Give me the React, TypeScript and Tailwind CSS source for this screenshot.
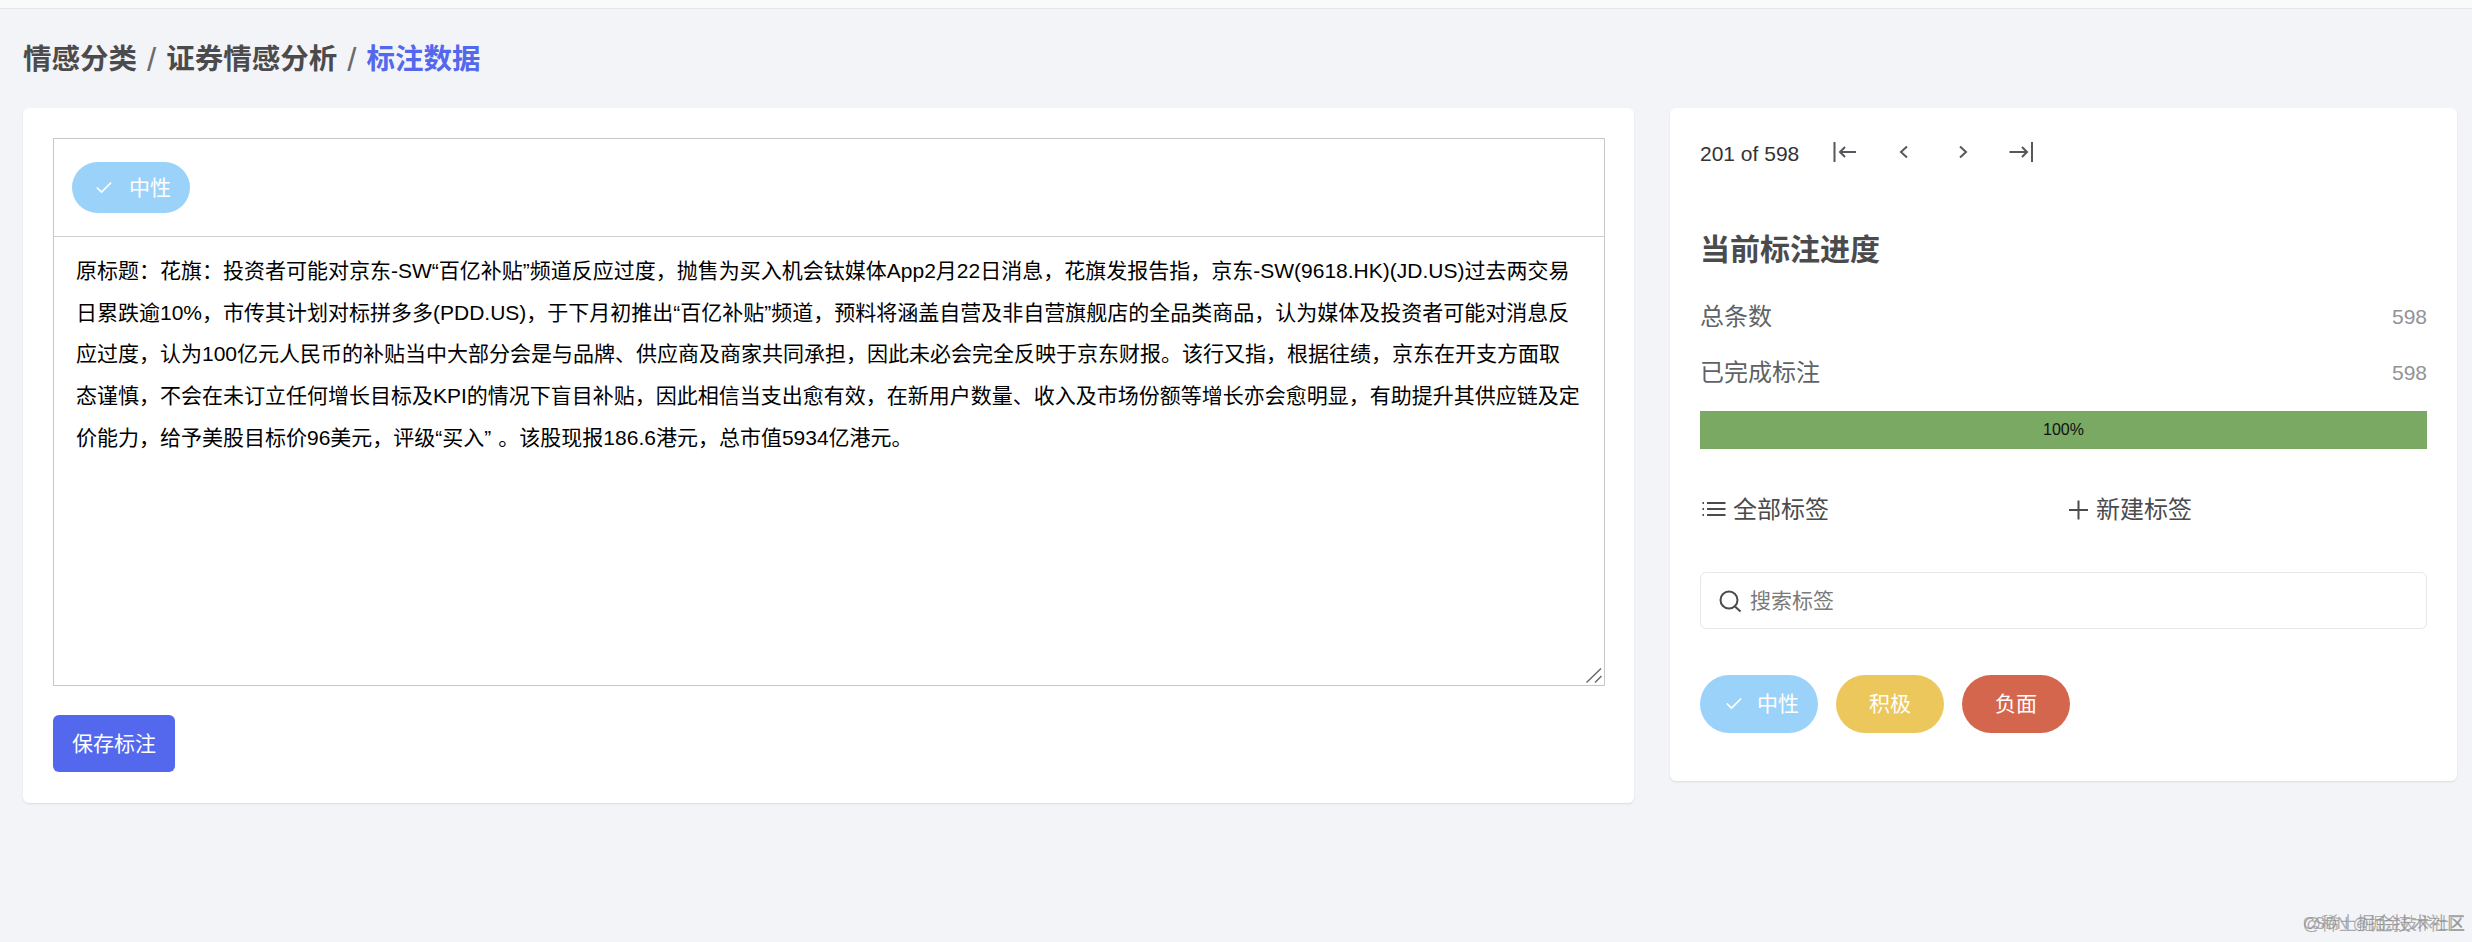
import { Check } from 'lucide-react'

const lines = [
  '原标题：花旗：投资者可能对京东-SW“百亿补贴”频道反应过度，抛售为买入机会钛媒体App2月22日消息，花旗发报告指，京东-SW(9618.HK)(JD.US)过去两交易',
  '日累跌逾10%，市传其计划对标拼多多(PDD.US)，于下月初推出“百亿补贴”频道，预料将涵盖自营及非自营旗舰店的全品类商品，认为媒体及投资者可能对消息反',
  '应过度，认为100亿元人民币的补贴当中大部分会是与品牌、供应商及商家共同承担，因此未必会完全反映于京东财报。该行又指，根据往绩，京东在开支方面取',
  '态谨慎，不会在未订立任何增长目标及KPI的情况下盲目补贴，因此相信当支出愈有效，在新用户数量、收入及市场份额等增长亦会愈明显，有助提升其供应链及定',
]

function NavIcon({ d, className }: { d: string; className?: string }) {
  return (
    <svg viewBox="0 0 26 26" fill="none" stroke="#57575c" strokeWidth={2} className={`h-[26px] w-[26px] ${className ?? ''}`}>
      <path d={d} />
    </svg>
  )
}

export default function App() {
  return (
    <div className="relative min-h-[942px] bg-[#f3f4f8] font-['Liberation_Sans','Noto_Sans_CJK_SC',sans-serif]">
      {/* Top bar */}
      <div className="h-[9px] border-b border-[#e6e7ea] bg-[#fafafb]" />

      <div className="flex h-[99px] items-center pt-[2px] pl-[23px] text-[28.5px] font-semibold text-[#4b4b4d]">
        <span>情感分类</span>
        <span className="mx-[10px] text-[33px] font-normal text-[#6b6b6e]">/</span>
        <span>证券情感分析</span>
        <span className="mx-[10px] text-[33px] font-normal text-[#6b6b6e]">/</span>
        <span className="text-[#5468ee]">标注数据</span>
      </div>

      <div className="flex items-start pl-[23px]">
        {/* Left card */}
        <div className="h-[695px] w-[1611px] rounded-md bg-white pl-[30px] pr-[29px] pt-[30px] shadow-[0_1px_2px_rgba(0,0,0,0.1)]">
          <div className="border border-[#c8c8c8]">
            <div className="flex h-[98px] items-center border-b border-[#cfcfcf] pl-[18px]">
              <div className="flex h-[51px] w-[118px] items-center rounded-[26px] bg-[#9bd2f9] pl-[22px] text-[21px] text-white">
                <Check className="h-[20px] w-[20px]" strokeWidth={2} />
                <span className="ml-[15px]">中性</span>
              </div>
            </div>
            <div className="relative h-[448px] px-[22px] pt-[13px] text-[21px] leading-[41.7px] text-black">
              {lines.map((line) => (
                <div key={line} className="whitespace-nowrap">
                  {line}
                </div>
              ))}
              <div className="whitespace-nowrap">
                价能力，给予美股目标价96美元，评级“买入”<span className="ml-[7px]">。该股现报186.6港元，总市值5934亿港元。</span>
              </div>
              {/* Resize handle */}
              <svg viewBox="0 0 16 16" fill="none" stroke="#666" strokeWidth={1.4} className="absolute bottom-[2px] right-[2px] h-[16px] w-[16px]">
                <path d="M0.5 15.5 15 1.5M9 15.5 15.5 9" />
              </svg>
            </div>
          </div>
          <button className="mt-[29px] flex h-[57px] w-[122px] items-center justify-center rounded-md bg-[#5468ee] text-[21px] text-white">
            保存标注
          </button>
        </div>

        {/* Right card */}
        <div className="ml-[36px] h-[673px] w-[787px] rounded-md bg-white pl-[30px] pr-[30px] pt-[30px] shadow-[0_1px_2px_rgba(0,0,0,0.1)]">
          <div className="flex h-[32px] items-center">
            <span className="w-[132px] text-[21px] text-[#333]">201 of 598</span>
            <NavIcon d="M2.5 1v20M24 11H8M13 6l-5 5 5 5" />
            <NavIcon d="M16 5.5 10 11l6 5.5" className="ml-[33px]" />
            <NavIcon d="M10 5.5 16 11l-6 5.5" className="ml-[33px]" />
            <NavIcon d="M23 1v20M0.5 11H18M13 6l5 5-5 5" className="ml-[33px]" />
          </div>

          <h2 className="mt-[60px] text-[30px] font-semibold leading-[40px] text-[#4b4b4d]">当前标注进度</h2>

          <div className="mt-[27px] flex h-[40px] items-center justify-between text-[24px] text-[#606266]">
            <span>总条数</span>
            <span className="text-[21px] text-[#909399]">598</span>
          </div>
          <div className="mt-[16px] flex h-[40px] items-center justify-between text-[24px] text-[#606266]">
            <span>已完成标注</span>
            <span className="text-[21px] text-[#909399]">598</span>
          </div>

          <div className="mt-[18px] flex h-[38px] items-center justify-center bg-[#7aa964] text-[16px] text-[#111]">
            100%
          </div>

          <div className="mt-[42px] flex h-[38px] items-center text-[24px] text-[#4b4b4d]">
            <div className="flex w-[366px] items-center">
              <svg viewBox="0 0 26 26" fill="none" stroke="#4b4b4d" strokeWidth={2} className="h-[26px] w-[26px]">
                <path d="M7 6h18.5M7 12h18.5M7 18h18.5" />
                <path d="M2.5 6h1.5M2.5 12h1.5M2.5 18h1.5" />
              </svg>
              <span className="ml-[7px]">全部标签</span>
            </div>
            <svg viewBox="0 0 26 26" fill="none" stroke="#4b4b4d" strokeWidth={2} className="h-[26px] w-[26px]">
              <path d="M12.5 3.5v19M3 13h19" />
            </svg>
            <span className="ml-[4px]">新建标签</span>
          </div>

          <div className="mt-[43px] flex h-[57px] items-center rounded-md border border-[#e5e7eb] pl-[16px] text-[21px] text-[#7a7a7a]">
            <svg viewBox="0 0 26 26" fill="none" stroke="#4b4b4d" strokeWidth={2} className="h-[26px] w-[26px]">
              <circle cx="12" cy="12" r="8.5" />
              <path d="M18 18.5 23.5 23.5" />
            </svg>
            <span className="ml-[7px]">搜索标签</span>
          </div>

          <div className="mt-[46px] flex gap-[18px] text-[21px] text-white">
            <div className="flex h-[58px] w-[118px] items-center rounded-[29px] bg-[#9bd2f9] pl-[24px]">
              <Check className="h-[20px] w-[20px]" strokeWidth={2} />
              <span className="ml-[13px]">中性</span>
            </div>
            <div className="flex h-[58px] w-[108px] items-center justify-center rounded-[29px] bg-[#ecc75b]">积极</div>
            <div className="flex h-[58px] w-[108px] items-center justify-center rounded-[29px] bg-[#d5664e]">负面</div>
          </div>
        </div>
      </div>

      {/* Overlapping watermarks */}
      <span className="absolute bottom-[8px] right-[7px] text-[18px] leading-[20px] text-[#8a8a8a]/70">@稀土掘金技术社区</span>
      <span className="absolute bottom-[8px] right-[7px] text-[16px] leading-[20px] text-[#8a8a8a]/70">CSDN @掘金技术社区</span>
    </div>
  )
}
